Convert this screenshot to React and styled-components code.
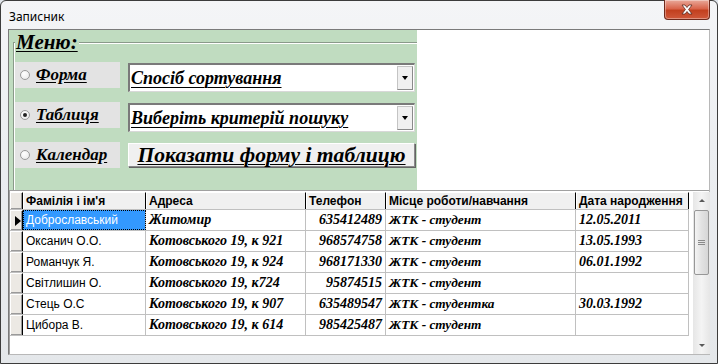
import styled, { createGlobalStyle } from "styled-components";

const GlobalStyle = createGlobalStyle`
  html, body {
    margin: 0;
    padding: 0;
    width: 718px;
    height: 364px;
    overflow: hidden;
    background: #dfe4ea;
  }
  * { box-sizing: border-box; }
`;

const rows = [
  { name: "Доброславський", addr: "Житомир", phone: "635412489", work: "ЖТК - студент", date: "12.05.2011", current: true },
  { name: "Оксанич О.О.", addr: "Котовського 19, к 921", phone: "968574758", work: "ЖТК - студент", date: "13.05.1993" },
  { name: "Романчук Я.", addr: "Котовського 19, к 924", phone: "968171330", work: "ЖТК - студент", date: "06.01.1992" },
  { name: "Світлишин О.", addr: "Котовського 19, к724", phone: "95874515", work: "ЖТК - студент", date: "" },
  { name: "Стець О.С", addr: "Котовського 19, к 907", phone: "635489547", work: "ЖТК - студентка", date: "30.03.1992" },
  { name: "Цибора В.", addr: "Котовського 19, к 614", phone: "985425487", work: "ЖТК - студент", date: "" },
];

const columns = [
  { key: "name", title: "Фамілія і ім'я", width: 123 },
  { key: "addr", title: "Адреса", width: 160 },
  { key: "phone", title: "Телефон", width: 80 },
  { key: "work", title: "Місце роботи/навчання", width: 190 },
  { key: "date", title: "Дата народження", width: 113 },
];

const Window = styled.div`
  width: 718px;
  height: 364px;
  border: 1px solid #3c3c3c;
  border-radius: 6px 6px 0 0;
  background: linear-gradient(180deg, #f4f5f7 0%, #eceef1 40%, #e4e7ea 100%);
  display: flex;
  flex-direction: column;
  padding: 0 7px 8px 7px;
`;

const TitleBar = styled.div`
  height: 28px;
  display: flex;
  align-items: flex-start;
  justify-content: space-between;
`;

const Title = styled.div`
  font-family: "Noto Sans", "DejaVu Sans", sans-serif;
  font-size: 12px;
  color: #000;
  padding: 7px 0 0 1px;
`;

const CloseBtn = styled.div`
  width: 46px;
  height: 20px;
  margin-top: -1px;
  border: 1px solid #6e2a1c;
  border-top: none;
  border-radius: 0 0 4px 4px;
  background: linear-gradient(180deg, #e9a99a 0%, #d9654c 45%, #c2401f 55%, #d0583a 100%);
  display: flex;
  align-items: center;
  justify-content: center;
  box-shadow: inset 0 0 0 1px rgba(255, 255, 255, 0.35);
`;

const Client = styled.div`
  flex: 1;
  background: #fff;
  border-top: 1px solid #7a7a7a;
  border-left: 1px solid #7a7a7a;
  border-right: 1px solid #b8b8b8;
  border-bottom: 1px solid #b8b8b8;
  display: flex;
  flex-direction: column;
`;

const Panel = styled.div`
  width: 408px;
  height: 160px;
  background: #c0dcc0;
  padding: 2px 0 0 4px;
  display: flex;
  flex-direction: column;
`;

const Group = styled.div`
  border-left: 1px solid #8a9a8a;
  border-top: 1px solid #8a9a8a;
  box-shadow: inset 1px 1px 0 #fff;
  margin-top: 10px;
  flex: 1;
  position: relative;
  padding: 20px 0 0 1px;
  display: flex;
  flex-direction: column;
  gap: 11px;
`;

const Legend = styled.div`
  position: absolute;
  top: -12px;
  left: 1px;
  background: #c0dcc0;
  padding: 0 1px;
  font-family: "Liberation Serif", serif;
  font-style: italic;
  font-weight: bold;
  font-size: 21px;
  line-height: 22px;
  text-decoration: underline;
  text-decoration-thickness: 1px;
  text-underline-offset: 2px;
  color: #000;
`;

const Row = styled.div`
  display: flex;
  align-items: flex-start;
  gap: 8px;
`;

const OptionBox = styled.div`
  width: 105px;
  height: 26px;
  margin-top: -1px;
  background: #e3e3e3;
  display: flex;
  align-items: center;
  padding-left: 5px;
  gap: 6px;
`;

const Radio = styled.span`
  width: 10px;
  height: 10px;
  border-radius: 50%;
  border: 1px solid #9a9a9a;
  background: radial-gradient(circle at 40% 35%, #fff 0%, #e6e6e6 100%);
  display: flex;
  align-items: center;
  justify-content: center;
  &::after {
    content: "";
    width: 4px;
    height: 4px;
    border-radius: 50%;
    background: ${(p) => (p.$checked ? "#222" : "transparent")};
  }
`;

const OptionLabel = styled.span`
  font-family: "Liberation Serif", serif;
  font-style: italic;
  font-weight: bold;
  font-size: 17px;
  text-decoration: underline;
  text-underline-offset: 2px;
  color: #000;
`;

const Combo = styled.div`
  width: 287px;
  height: 29px;
  background: #fff;
  border-top: 2px solid #7a7a7a;
  border-left: 2px solid #7a7a7a;
  border-right: 1px solid #d8d8d8;
  border-bottom: 1px solid #d8d8d8;
  display: flex;
  align-items: center;
  justify-content: space-between;
  padding: 0 1px 0 1px;
`;

const ComboText = styled.span`
  font-family: "Liberation Serif", serif;
  font-style: italic;
  font-weight: bold;
  font-size: 18px;
  text-decoration: underline;
  text-decoration-thickness: 1px;
  text-underline-offset: 3px;
  color: #000;
  white-space: nowrap;
`;

const DropBtn = styled.div`
  width: 16px;
  height: 24px;
  background: #f0f0f0;
  border: 1px solid #c4c4c4;
  border-right-color: #8a8a8a;
  border-bottom-color: #8a8a8a;
  display: flex;
  align-items: center;
  justify-content: center;
  &::after {
    content: "";
    border-left: 3.5px solid transparent;
    border-right: 3.5px solid transparent;
    border-top: 4px solid #000;
  }
`;

const ShowButton = styled.div`
  width: 287px;
  height: 24px;
  background: #f0f0f0;
  border: 1px solid #fff;
  border-right-color: #8a8a8a;
  border-bottom-color: #8a8a8a;
  box-shadow: 1px 1px 0 #646464;
  display: flex;
  align-items: center;
  justify-content: center;
  font-family: "Liberation Serif", serif;
  font-style: italic;
  font-weight: bold;
  font-size: 21.6px;
  text-decoration: underline;
  text-decoration-thickness: 1px;
  text-underline-offset: 2px;
  color: #000;
  white-space: nowrap;
`;

const Grid = styled.div`
  flex: 1;
  display: flex;
  border-top: 1px solid #a0a0a0;
  border-left: 1px solid #a0a0a0;
  padding: 1px 0 0 0;
`;

const Table = styled.div`
  flex: 1;
  display: flex;
  flex-direction: column;
`;

const TRow = styled.div`
  display: flex;
  height: ${(p) => (p.$header ? "18px" : "21px")};
  border-bottom: 1px solid #c0c0c0;
`;

const Selector = styled.div`
  width: 13px;
  flex: none;
  background: #ece9e4;
  border-right: 1px solid #000;
  border-top: 1px solid #fff;
  border-left: 1px solid #fff;
  box-shadow: inset -1px -1px 0 #9a9a9a;
  display: flex;
  align-items: center;
  justify-content: center;
  &::after {
    content: "";
    display: ${(p) => (p.$current ? "block" : "none")};
    border-top: 5px solid transparent;
    border-bottom: 5px solid transparent;
    border-left: 6px solid #000;
    margin-left: 2px;
  }
`;

const HeadCell = styled.div`
  width: ${(p) => p.$w}px;
  flex: none;
  background: #f0f0f0;
  border-right: 1px solid #000;
  border-top: 1px solid #fff;
  border-left: 1px solid #fff;
  font-family: "Liberation Sans", Arial, sans-serif;
  font-weight: bold;
  font-size: 12px;
  display: flex;
  align-items: center;
  padding-left: 2px;
  color: #000;
  white-space: nowrap;
  overflow: hidden;
`;

const fonts = {
  sans: `font-family: "Liberation Sans", Arial, sans-serif; font-size: 12px; font-weight: normal; font-style: normal;`,
  serif: `font-family: "Liberation Serif", serif; font-size: 14px; font-weight: bold; font-style: italic;`,
  small: `font-family: "Liberation Serif", serif; font-size: 13.3px; font-weight: bold; font-style: italic;`,
};

const Cell = styled.div`
  width: ${(p) => p.$w}px;
  flex: none;
  border-right: 1px solid #c0c0c0;
  display: flex;
  align-items: center;
  justify-content: ${(p) => (p.$right ? "flex-end" : "flex-start")};
  padding: 0 3px 0 3px;
  white-space: nowrap;
  overflow: hidden;
  color: ${(p) => (p.$selected ? "#fff" : "#000")};
  background: ${(p) => (p.$selected ? "#3399ff" : "transparent")};
  outline: ${(p) => (p.$selected ? "1px dotted #000" : "none")};
  outline-offset: -1px;
  ${(p) => fonts[p.$font || "serif"]}
`;

const Spacer = styled.div`
  width: 4px;
  flex: none;
`;

const ScrollBar = styled.div`
  width: 17px;
  flex: none;
  margin-right: 1px;
  background: linear-gradient(90deg, #e6e6e6, #f4f4f4 50%, #e6e6e6);
  display: flex;
  flex-direction: column;
  align-items: stretch;
`;

const ScrollArrow = styled.div`
  height: 17px;
  display: flex;
  align-items: center;
  justify-content: center;
  &::after {
    content: "";
    border-left: 3px solid transparent;
    border-right: 3px solid transparent;
    ${(p) => (p.$up ? "border-bottom: 3px solid #5a5a5a;" : "border-top: 3px solid #5a5a5a;")}
  }
`;

const Thumb = styled.div`
  height: 65px;
  margin: 1px 1px;
  border: 1px solid #979797;
  border-radius: 2px;
  background: linear-gradient(90deg, #f4f4f4, #e2e2e2 50%, #d6d6d6);
  display: flex;
  flex-direction: column;
  align-items: center;
  justify-content: center;
  gap: 1px;
  & > span {
    width: 7px;
    height: 1px;
    background: #8a8a8a;
  }
`;

const Track = styled.div`
  flex: 1;
`;

const App = () => {
  return (
    <>
      <GlobalStyle />
      <Window>
        <TitleBar>
          <Title>Записник</Title>
          <CloseBtn>
            <svg width="14" height="11" viewBox="0 0 14 11">
              <path
                d="M2 1 L5 1 L7 3.5 L9 1 L12 1 L8.6 5.5 L12 10 L9 10 L7 7.5 L5 10 L2 10 L5.4 5.5 Z"
                fill="#fff"
                stroke="#5a2a20"
                strokeWidth="0.8"
              />
            </svg>
          </CloseBtn>
        </TitleBar>
        <Client>
          <Panel>
            <Group>
              <Legend>Меню:</Legend>
              <Row>
                <OptionBox>
                  <Radio />
                  <OptionLabel>Форма</OptionLabel>
                </OptionBox>
                <Combo>
                  <ComboText>Спосіб сортування</ComboText>
                  <DropBtn />
                </Combo>
              </Row>
              <Row>
                <OptionBox>
                  <Radio $checked />
                  <OptionLabel>Таблиця</OptionLabel>
                </OptionBox>
                <Combo>
                  <ComboText>Виберіть критерій пошуку</ComboText>
                  <DropBtn />
                </Combo>
              </Row>
              <Row>
                <OptionBox>
                  <Radio />
                  <OptionLabel>Календар</OptionLabel>
                </OptionBox>
                <ShowButton>Показати форму і таблицю</ShowButton>
              </Row>
            </Group>
          </Panel>
          <Grid>
            <Table>
              <TRow $header>
                <Selector />
                {columns.map((c) => (
                  <HeadCell key={c.key} $w={c.width}>
                    {c.title}
                  </HeadCell>
                ))}
              </TRow>
              {rows.map((r, i) => (
                <TRow key={i}>
                  <Selector $current={r.current} />
                  <Cell $w={123} $font="sans" $selected={r.current}>{r.name}</Cell>
                  <Cell $w={160}>{r.addr}</Cell>
                  <Cell $w={80} $right>{r.phone}</Cell>
                  <Cell $w={190} $font="small">{r.work}</Cell>
                  <Cell $w={113}>{r.date}</Cell>
                </TRow>
              ))}
            </Table>
            <Spacer />
            <ScrollBar>
              <ScrollArrow $up />
              <Thumb>
                <span />
                <span />
                <span />
              </Thumb>
              <Track />
              <ScrollArrow />
            </ScrollBar>
          </Grid>
        </Client>
      </Window>
    </>
  );
};

export default App;
